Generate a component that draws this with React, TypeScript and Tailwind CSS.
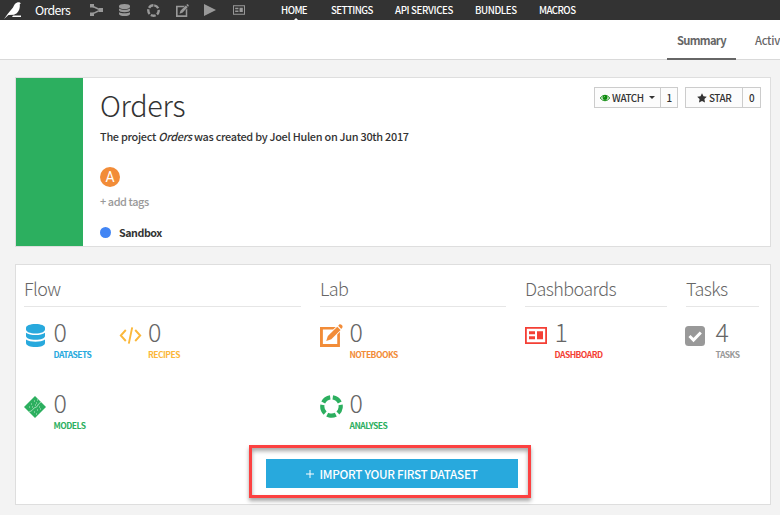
import type { ReactNode } from "react";

type IconProps = { className?: string };

function Database({ className }: IconProps) {
  return (
    <svg viewBox="0 0 20 24" preserveAspectRatio="none" fill="currentColor" className={className}>
      <path d="M10 0C4 0 0 1.7 0 4v1.8C0 8.2 4.3 10 10 10s10-1.8 10-4.2V4c0-2.3-4-4-10-4Z" />
      <path d="M0 9.2c2.2 1.7 6 2.4 10 2.4s7.800-.7 10-2.400v3.300c0 2.400-4.300 4-10 4s-10-1.600-10-4Z" />
      <path d="M0 16.300c2.200 1.600 6 2.300 10 2.300s7.800-.7 10-2.300v3.500c0 2.500-4.300 4.200-10 4.200s-10-1.700-10-4.200Z" />
    </svg>
  );
}

function Ring({ className }: IconProps) {
  return (
    <svg viewBox="0 0 24 24" fill="none" stroke="currentColor" strokeWidth="4.400" className={className}>
      <circle cx="12" cy="12" r="9.600" pathLength="100" strokeDasharray="15.500 4.500" transform="rotate(-82 12 12)" />
    </svg>
  );
}

function Notebook({ className }: IconProps) {
  return (
    <svg viewBox="0 0 24 24" fill="currentColor" className={className}>
      <path d="M0 3h16.500l-2.800 2.800H3v15h15V11l2.800-2.800V24H0Z" />
      <path d="m6.500 17.800 1.700-5.400L18 2.800l3.500 3.400-9.700 9.800Z" />
      <path d="m19 1.800.9-1c1.500-1.500 4.800 1.400 3.300 3.200l-1 1.100Z" />
    </svg>
  );
}

function Board({ className }: IconProps) {
  return (
    <svg viewBox="0 0 22 17" fill="currentColor" className={className}>
      <path fillRule="evenodd" d="M0 0h22v17H0Zm1.800 1.800v13.400h18.400V1.800Z" />
      <path d="M4 4.300h6v3H4Zm0 5h6v3H4Zm8-5h6v8h-6Z" />
    </svg>
  );
}

function FlowIcon({ className }: IconProps) {
  return (
    <svg viewBox="0 0 13 12" className={className} fill="currentColor">
      <path d="M0 0h4v3.500H0Zm0 8.500h4V12H0Zm9-4.400h4v3.800H9Z" />
      <path d="M2 2 10.500 6 2 10.200" fill="none" stroke="currentColor" strokeWidth="1.500" />
    </svg>
  );
}

function CodeIcon({ className }: IconProps) {
  return (
    <svg viewBox="0 0 22 17" className={className} fill="none" stroke="currentColor" strokeWidth="1.900">
      <path d="M6.300 3 1.300 8.500l5 5.500M15.700 3l5 5.500-5 5.500M12.700.4 9.300 16.600" />
    </svg>
  );
}

function ModelIcon({ className }: IconProps) {
  return (
    <svg viewBox="0 0 22 22" className={className}>
      <path fill="currentColor" d="M11 0 22 11 11 22 0 11Z" />
      <path d="m5 16 3-1.500L10 12l3-1.300L14.500 8 17 6" fill="none" stroke="#b9e5c9" strokeWidth=".8" />
      <path d="M7 8h1M10 5h1M12 7h1M5 11h1M8 11h1M11 9h1M10 16h1M13 14h1M15 11h1M16 13h1M12 18h1M13 4h1" stroke="#b9e5c9" strokeWidth="1" />
    </svg>
  );
}

function Check({ className }: IconProps) {
  return (
    <svg viewBox="0 0 20 20" className={className}>
      <rect width="20" height="20" rx="3.500" fill="currentColor" />
      <path d="m4.500 10 4 4 7.300-7.500" fill="none" stroke="#fff" strokeWidth="3" />
    </svg>
  );
}

function Bird() {
  return (
    <svg viewBox="0 0 18 17" className="h-[17px] w-[18px]" fill="#fff">
      <path d="M0 17 4 11.500 9 5.500C10 3 11.500.8 13.700.3c1.500-.3 2.500.4 3.300 1l-1.200.7c.3 3.800-.5 6.800-3 9.300l-2.800 1.500L4.500 13Z" />
      <path d="M9 13.500h8v1.500H8Z" />
    </svg>
  );
}

function Eye() {
  return (
    <svg viewBox="0 0 10 8" className="h-2 w-[10px]">
      <path d="M.4 4C2.500.4 7.500.4 9.600 4 7.500 7.600 2.500 7.600.4 4Z" fill="none" stroke="#0b8a0b" strokeWidth="1" />
      <circle cx="5" cy="3.600" r="2.500" fill="#0b8a0b" />
      <path d="M3.900 3.400c0-.7.4-1 1-1.100" stroke="#fff" strokeWidth=".5" fill="none" />
    </svg>
  );
}

function Stat({ icon, value, label, color }: { icon: ReactNode; value: string; label: string; color: string }) {
  return (
    <div className={`flex h-[71px] ${color}`}>
      <div className="flex h-[35px] w-[29.500px] shrink-0 items-center">{icon}</div>
      <div className="whitespace-nowrap">
        <div className="h-[30px] text-[25px] leading-[26px] font-light text-[#666]">{value}</div>
        <div className="h-3 text-[8.500px] leading-[12px] font-bold tracking-[-0.520px]">{label}</div>
      </div>
    </div>
  );
}

function Section({ title, className, children }: { title: string; className: string; children: ReactNode }) {
  return (
    <section className={className}>
      <h2 className="h-[42px] border-b border-[#e6e6e6] pt-[11px] text-[18px] leading-[25px] font-light tracking-[-0.600px] text-[#666]">{title}</h2>
      <div className="pt-[11px]">{children}</div>
    </section>
  );
}

export default function App() {
  return (
    <div className="h-[515px] w-[780px] overflow-hidden bg-[#f3f3f3] font-['Noto_Sans_CJK_SC','Source_Sans_Pro',sans-serif] text-[#333]">
      <header className="flex h-5 items-center bg-[#333] text-white">
        <div className="ml-[4px] flex w-[31px] items-center pt-px"><Bird /></div>
        <div className="w-[55px] text-[12.400px] leading-[21px] tracking-[-0.650px]">Orders</div>
        <div className="flex w-[191px] items-center text-[#999]">
          <FlowIcon className="mr-[16px] h-3 w-[13px]" />
          <Database className="mr-[17px] h-3 w-[11px]" />
          <Ring className="mr-[16px] h-[13px] w-[13px]" />
          <Notebook className="mr-[15px] h-[13px] w-[13px]" />
          <svg viewBox="0 0 12 12" className="mr-[17px] h-3 w-3" fill="currentColor"><path d="M0 0 12 6 0 12Z" /></svg>
          <Board className="h-[10px] w-[12px]" />
        </div>
        <nav className="flex text-[9.700px] leading-[21px] font-medium tracking-[-0.550px] whitespace-nowrap">
          <a className="relative w-[50px]">HOME
            <span className="absolute bottom-0 left-[12px] h-0 w-0 border-x-3 border-b-3 border-x-transparent border-b-white" />
          </a>
          <a className="w-[64px]">SETTINGS</a>
          <a className="w-[80px] tracking-[-0.350px]">API SERVICES</a>
          <a className="w-[64px] tracking-[-0.400px]">BUNDLES</a>
          <a>MACROS</a>
        </nav>
      </header>
      <div className="flex h-10 border-b border-[#d9d9d9] bg-white pl-[667px] text-[11.200px] leading-[41px] tracking-[-0.700px] text-[#666]">
        <div className="h-10 w-[69px] shrink-0 border-b-2 border-[#666] text-center font-bold">Summary</div>
        <div className="ml-[19px] whitespace-nowrap font-medium tracking-[-0.250px]">Activity</div>
      </div>
      <main className="pt-[17px] pl-[15px]">
        <div className="flex h-[170px] w-[756px] border border-[#dedede] bg-white">
          <div className="w-[67px] bg-[#2caf5f]" />
          <div className="w-[494px] pl-[17px]">
            <h1 className="mt-[10px] h-[38px] text-[28.800px] leading-[34px] font-light tracking-[-0.350px]">Orders</h1>
            <p className="h-5 text-[10.900px] leading-5 font-medium tracking-[-0.275px] whitespace-nowrap">The project <i>Orders</i> was created by Joel Hulen on Jun 30th 2017</p>
            <div className="mt-[21px] flex h-5 w-5 items-center justify-center rounded-full bg-[#f28c38] font-['Roboto'] text-[14px] leading-5 text-white">A</div>
            <div className="mt-[5px] h-5 text-[10.900px] leading-[19px] font-medium tracking-[-0.420px] text-[#999]">+ add tags</div>
            <div className="mt-[10px] flex h-5 items-center text-[10.700px] leading-[19px] font-bold tracking-[-0.450px]"><span className="mr-2 h-[11px] w-[11px] rounded-full bg-[#4285f4]" />Sandbox</div>
          </div>
          <div className="mt-[9px] flex h-[21px] pl-[17px] text-[9.900px] leading-[20px] font-medium tracking-[-0.450px]">
            <div className="flex w-[84px] border border-[#ccc] bg-[#fcfcfc]">
              <div className="flex w-[66px] items-center gap-[2px] border-r border-[#ccc] pl-[5px]"><Eye />WATCH
                <span className="ml-[3px] h-0 w-0 border-x-3 border-t-3 border-x-transparent border-t-[#333]" />
              </div>
              <div className="flex-1 text-center">1</div>
            </div>
            <div className="ml-[7px] flex w-[76px] border border-[#ccc] bg-[#fcfcfc]">
              <div className="flex w-[57px] items-center gap-[2px] border-r border-[#ccc] pl-[11px]">
                <svg viewBox="0 0 10 10" className="h-[10px] w-[10px]" fill="#333"><path d="m5 .3 1.500 3 3.300.5-2.400 2.300.6 3.300L5 7.900 2 9.400l.6-3.300L.2 3.800l3.300-.5Z" /></svg>STAR
              </div>
              <div className="flex-1 text-center">0</div>
            </div>
          </div>
        </div>
        <div className="mt-[17px] h-[241px] w-[756px] border border-[#dedede] bg-white">
          <div className="flex h-[180px] pl-2">
            <Section title="Flow" className="mr-[19px] w-[277px]">
              <div className="flex">
                <div className="w-[94.500px]"><Stat icon={<Database className="ml-[2px] h-[23px] w-[19px]" />} value="0" label="DATASETS" color="text-[#28a9dd]" /></div>
                <Stat icon={<CodeIcon className="h-[17px] w-[23px]" />} value="0" label="RECIPES" color="text-[#fbb83b]" />
              </div>
              <Stat icon={<ModelIcon className="h-[22px] w-[22px]" />} value="0" label="MODELS" color="text-[#2caf5f]" />
            </Section>
            <Section title="Lab" className="mr-[19px] w-[186px]">
              <Stat icon={<Notebook className="h-[23px] w-[23px]" />} value="0" label="NOTEBOOKS" color="text-[#f28c38]" />
              <Stat icon={<Ring className="h-[23px] w-[23px]" />} value="0" label="ANALYSES" color="text-[#2caf5f]" />
            </Section>
            <Section title="Dashboards" className="mr-[19px] w-[142px]">
              <Stat icon={<Board className="h-[17px] w-[22px]" />} value="1" label="DASHBOARD" color="text-[#f43f35]" />
            </Section>
            <Section title="Tasks" className="w-[73px]">
              <Stat icon={<Check className="-ml-px h-[20px] w-[20px]" />} value="4" label="TASKS" color="text-[#999]" />
            </Section>
          </div>
          <div className="relative ml-[233px] flex h-[53px] w-[282px] items-start border-3 border-[#fc4141] pt-[11px] pl-[14px] shadow-[0_3px_4px_rgba(0,0,0,0.35),inset_0_3px_4px_rgba(0,0,0,0.35)]">
            <button className="flex h-[29px] w-[252px] items-center justify-center gap-[5px] bg-[#28a9dd] text-[11.700px] leading-[29px] font-medium tracking-[-0.270px] text-white">
              <svg viewBox="0 0 8 8" className="h-2 w-2" stroke="white"><path d="M0 4h8M4 0v8" /></svg>
              IMPORT YOUR FIRST DATASET
            </button>
          </div>
        </div>
      </main>
    </div>
  );
}
